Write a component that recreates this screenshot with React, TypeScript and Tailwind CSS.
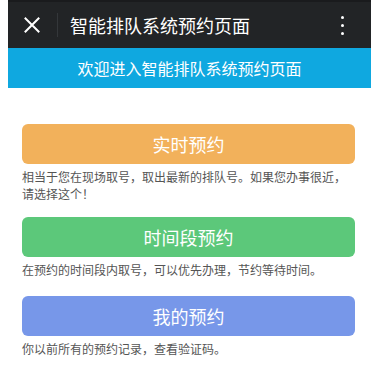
const options = [
  {
    title: "实时预约",
    desc: "相当于您在现场取号，取出最新的排队号。如果您办事很近，请选择这个！",
    color: "bg-[#f2b15b]",
    gap: "mt-0",
  },
  {
    title: "时间段预约",
    desc: "在预约的时间段内取号，可以优先办理，节约等待时间。",
    color: "bg-[#5cc87a]",
    gap: "mt-[15px]",
  },
  {
    title: "我的预约",
    desc: "你以前所有的预约记录，查看验证码。",
    color: "bg-[#7797e9]",
    gap: "mt-[18px]",
  },
];

export default function App() {
  return (
    <div
      className="w-[379px] h-[379px] bg-white overflow-hidden"
      style={{ fontFamily: '"Noto Sans CJK SC", "Noto Sans", sans-serif' }}
    >
      {/* Header + welcome band */}
      <div className="mx-2">
        <div className="h-12 bg-[#222426] border-t-2 border-[#1a1b1d] flex items-center text-white">
          <div className="w-12 flex justify-center">
            {/* close icon */}
            <svg width="16" height="16" viewBox="0 0 16 16" fill="none" stroke="white" strokeWidth="2" strokeLinecap="square">
              <path d="M1.5 1.5 L14.5 14.5 M14.5 1.5 L1.5 14.5" />
            </svg>
          </div>
          <div className="w-px h-6 bg-[#34373a] ml-[1px]" />
          <h1 className="ml-3 text-lg leading-none">智能排队系统预约页面</h1>
          <div className="ml-auto mr-[27px] flex flex-col gap-[5px]">
            <span className="w-[3px] h-[3px] rounded-full bg-white" />
            <span className="w-[3px] h-[3px] rounded-full bg-white" />
            <span className="w-[3px] h-[3px] rounded-full bg-white" />
          </div>
        </div>
        <div className="h-10 bg-[#0fa8e0] flex items-center justify-center text-white text-base">
          欢迎进入智能排队系统预约页面
        </div>
      </div>

      {/* Options */}
      <div className="px-[22px] pt-9 pr-6">
        {options.map((o) => (
          <div key={o.title} className={o.gap}>
            <button
              className={`w-full h-10 rounded-md ${o.color} text-white text-lg flex items-center justify-center`}
            >
              {o.title}
            </button>
            <p className="mt-1 text-xs leading-[17px] text-[#555555]">{o.desc}</p>
          </div>
        ))}
      </div>
    </div>
  );
}
